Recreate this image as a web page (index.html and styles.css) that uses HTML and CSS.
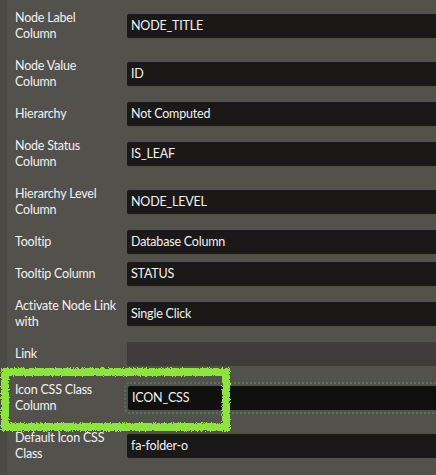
FILE: index.html
```html
<!DOCTYPE html>
<html lang="en">
<head>
<meta charset="utf-8">
<title>Property Editor</title>
<link rel="stylesheet" href="styles.css">
</head>
<body>
<div class="panel">
  <div class="row"><div class="label">Node Label<br>Column</div><div class="field">NODE_TITLE</div></div>
  <div class="row"><div class="label">Node Value<br>Column</div><div class="field">ID</div></div>
  <div class="row"><div class="label">Hierarchy</div><div class="field">Not Computed</div></div>
  <div class="row"><div class="label">Node Status<br>Column</div><div class="field">IS_LEAF</div></div>
  <div class="row"><div class="label">Hierarchy Level<br>Column</div><div class="field">NODE_LEVEL</div></div>
  <div class="row"><div class="label">Tooltip</div><div class="field">Database Column</div></div>
  <div class="row"><div class="label">Tooltip Column</div><div class="field">STATUS</div></div>
  <div class="row"><div class="label">Activate Node Link<br>with</div><div class="field">Single Click</div></div>
  <div class="row"><div class="label">Link</div><div class="field readonly"></div></div>
  <div class="row current">
    <span class="caret"></span>
    <div class="label">Icon CSS Class<br>Column</div><div class="field focused">ICON_CSS</div>
    <svg class="marker" width="234" height="68" viewBox="0 0 234 68">
      <defs>
        <filter id="rough" x="-5%" y="-10%" width="110%" height="120%">
          <feTurbulence type="fractalNoise" baseFrequency="0.9" numOctaves="2" seed="3"/>
          <feDisplacementMap in="SourceGraphic" scale="4"/>
        </filter>
      </defs>
      <rect x="6" y="6" width="221" height="55" fill="none" stroke="#8de43a" stroke-width="8" filter="url(#rough)"/>
    </svg>
  </div>
  <div class="row"><div class="label">Default Icon CSS<br>Class</div><div class="field">fa-folder-o</div></div>
</div>
</body>
</html>
```

FILE: styles.css
```css
html, body {
  margin: 0;
  padding: 0;
  background: #52514c;
}
body {
  font-family: Lato, "Open Sans", sans-serif;
  font-size: 12.5px;
  letter-spacing: -0.2px;
  color: #f2f2f0;
  overflow: hidden;
}
.panel {
  border-left: 7px solid #4b4a46;
  padding-top: 2px;
  min-height: 475px;
  box-sizing: border-box;
}
.row {
  position: relative;
  display: grid;
  grid-template-columns: 112px 1fr;
  align-items: center;
  padding: 4px 0 4px 8px;
}
.label {
  line-height: 16px;
  padding: 4px 4px 4px 0;
  white-space: nowrap;
}
.field {
  height: 24px;
  line-height: 24px;
  padding-left: 4px;
  background: #1a1918;
  border-radius: 2px 0 0 2px;
  white-space: nowrap;
  overflow: hidden;
}
.field.readonly {
  background: #3f3c39;
}
.row.current {
  margin-top: 4px;
}
.field.focused {
  background: #0f0f0e;
  margin-left: 1px;
  outline: 2px dotted #4d7a56;
  outline-offset: 2px;
}
.caret {
  position: absolute;
  left: -5px;
  top: 22px;
  width: 0;
  height: 0;
  border-top: 3px solid transparent;
  border-bottom: 3px solid transparent;
  border-right: 3px solid #ffffff;
}
.marker {
  position: absolute;
  left: -8px;
  top: -8px;
  pointer-events: none;
}
```
